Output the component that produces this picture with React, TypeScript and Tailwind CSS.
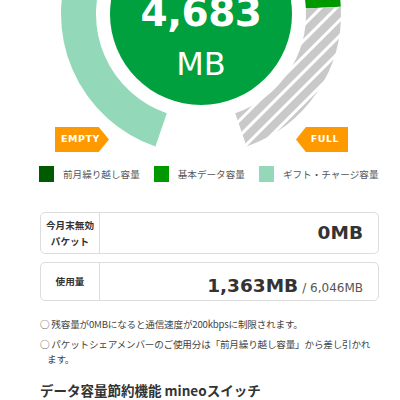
import React from 'react';

const CX = 201;
const CY = 14;

// arc path along a circle, angles in degrees (0 = right, clockwise on screen)
function arc(r: number, a0: number, a1: number) {
  const p = (a: number) => {
    const t = (a * Math.PI) / 180;
    return `${(CX + r * Math.cos(t)).toFixed(2)} ${(CY + r * Math.sin(t)).toFixed(2)}`;
  };
  const large = a1 - a0 > 180 ? 1 : 0;
  return `M ${p(a0)} A ${r} ${r} 0 ${large} 1 ${p(a1)}`;
}

const legend = [
  { color: 'bg-[#005a00]', label: '前月繰り越し容量' },
  { color: 'bg-[#009a00]', label: '基本データ容量' },
  { color: 'bg-[#93d9b9]', label: 'ギフト・チャージ容量' },
];

const Gauge = () => (
  <div className="relative h-[158px] w-full">
    <svg width="400" height="158" viewBox="0 0 400 158" className="block">
      <defs>
        <pattern id="stripes" width="11" height="11" patternUnits="userSpaceOnUse" patternTransform="rotate(45)">
          <rect width="11" height="11" fill="#c9c9c9" />
          <rect width="3" height="11" fill="#ffffff" />
        </pattern>
      </defs>
      <path d={arc(122.5, 109, 300)} stroke="#93d9b9" strokeWidth="35" fill="none" />
      <path d={arc(122.5, 300, 357)} stroke="#009a00" strokeWidth="35" fill="none" />
      <path d={arc(122.5, 357, 431)} stroke="url(#stripes)" strokeWidth="35" fill="none" />
      <circle cx={CX} cy={CY} r="91" fill="#00a03e" />
    </svg>

    <div className="absolute left-0 top-[-10px] w-[402px] text-center text-white font-['DejaVu_Sans',sans-serif]">
      <div className="text-[39px] font-bold leading-[46px] tracking-[-0.5px]">4,683</div>
      <div className="mt-[10px] text-[32px] leading-[36px]">MB</div>
    </div>

    <div className="absolute left-[55px] top-[127px] flex h-[25px] w-[54px] items-center pl-[6px] bg-[#ff9900] [clip-path:polygon(0_0,81%_0,100%_50%,81%_100%,0_100%)]">
      <span className="text-[9.5px] font-bold tracking-[0.5px] text-white font-['DejaVu_Sans',sans-serif]">EMPTY</span>
    </div>
    <div className="absolute left-[296px] top-[127px] flex h-[25px] w-[52px] items-center justify-end pr-[9px] bg-[#ff9900] [clip-path:polygon(0_50%,19%_0,100%_0,100%_100%,19%_100%)]">
      <span className="text-[9.5px] font-bold tracking-[0.5px] text-white font-['DejaVu_Sans',sans-serif]">FULL</span>
    </div>
  </div>
);

const App = () => {
  return (
    <div className="w-[400px] h-[400px] overflow-hidden bg-white font-['Noto_Sans_CJK_JP','Noto_Sans',sans-serif] text-[#333]">
      <Gauge />

      {/* legend */}
      <div className="mt-[8px] flex items-center pl-[39px] text-[9.6px] text-[#555]">
        {legend.map((l) => (
          <div key={l.label} className="mr-[14px] flex items-center">
            <span className={`mr-[9px] h-[16px] w-[15px] ${l.color}`} />
            <span>{l.label}</span>
          </div>
        ))}
      </div>

      <div className="ml-[40px] w-[339px]">
        {/* cards */}
        <div className="mt-[30px] flex h-[42px] rounded-[5px] border border-[#dcdcdc]">
          <div className="flex w-[59px] items-center justify-center border-r border-[#dcdcdc] text-center text-[9.6px] font-bold leading-[16px] text-[#333]">
            今月末無効<br />パケット
          </div>
          <div className="flex flex-1 items-center justify-end pr-[15px] font-['DejaVu_Sans',sans-serif] text-[18.5px] font-bold text-[#333]">
            0MB
          </div>
        </div>
        <div className="mt-[8px] flex h-[39px] rounded-[5px] border border-[#dcdcdc]">
          <div className="flex w-[59px] items-center justify-center border-r border-[#dcdcdc] text-[9.6px] font-bold text-[#333]">
            使用量
          </div>
          <div className="flex flex-1 items-baseline justify-end pr-[15px] pt-[9px] font-['DejaVu_Sans',sans-serif] text-[#333]">
            <span className="text-[18.5px] font-bold">1,363MB</span>
            <span className="ml-[4px] text-[12px] text-[#555]">/ 6,046MB</span>
          </div>
        </div>

        {/* notes */}
        <div className="mt-[16px] space-y-[5px] text-[9.6px] leading-[15px] tracking-[-0.2px] text-[#444]">
          <p className="pl-[7px] -indent-[7px]">○ 残容量が0MBになると通信速度が200kbpsに制限されます。</p>
          <p className="pl-[7px] -indent-[7px]">○ パケットシェアメンバーのご使用分は「前月繰り越し容量」から差し引かれます。</p>
        </div>

        <h2 className="mt-[14px] text-[13.5px] font-bold leading-[18px] text-[#333]">データ容量節約機能 mineoスイッチ</h2>
      </div>
    </div>
  );
};

export default App;
